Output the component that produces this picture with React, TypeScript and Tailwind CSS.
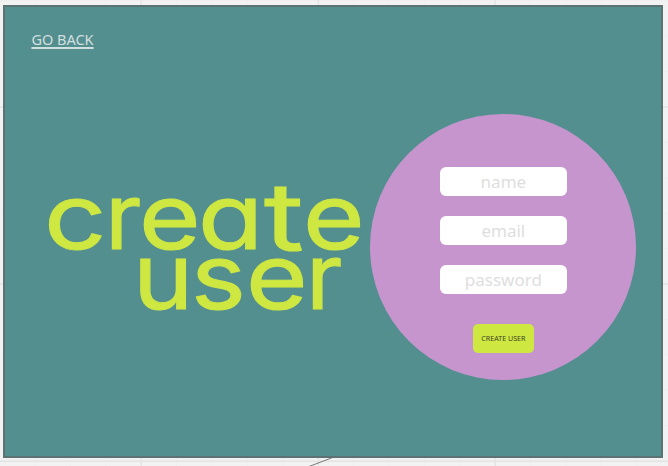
import type { ReactNode } from "react";

const fields = ["name", "email", "password"];

function Glyph({ className, children }: { className: string; children: ReactNode }) {
  return <span className={"block shrink-0 origin-left " + className}>{children}</span>;
}

function CanvasGrid() {
  const minor = Array.from({ length: 20 }, (_, i) => i);
  return (
    <svg className="absolute inset-0" width="668" height="466" fill="none">
      {minor.map((i) => (
        <path key={i} d={`M${35.4 * i - 0.5} 0V466M0 ${35.4 * i + 0.8}H668`} stroke="#eeeeee" />
      ))}
      <path d="M141.3 0V466M318.3 0V466M495.3 0V466M0 107H668M0 284H668M0 461.3H668" stroke="#e4e4e4" strokeWidth="1.5" />
      <path d="M309 466.5L334 457" stroke="#777" strokeWidth="1" />
    </svg>
  );
}

export default function App() {
  return (
    <main className="relative h-[466px] w-[668px] overflow-hidden bg-[#f2f2f2] pt-[5px] pl-[3.4px] font-['Noto_Sans',sans-serif]">
      <CanvasGrid />
      <section className="relative flex h-[453px] w-[660px] flex-col border-2 border-[#5b7473] bg-[#548f90]">
        <a className="mt-[20px] ml-[26px] h-[24px] w-fit text-[14.5px] leading-[24px] text-[#d2dfdf] underline decoration-[1.5px] underline-offset-[1.5px]">GO BACK</a>
        <div className="mt-[63px] flex">
          <h1 className="mt-[72px] ml-[38.7px] w-[326.3px] font-['Inter',sans-serif] text-[91px] leading-[60px] font-normal text-[#cee741] [-webkit-text-stroke:1.1px_#cee741] [font-feature-settings:'cv11']">
            <span className="flex">
              <Glyph className="w-[60.5px] scale-x-[1.2]">c</Glyph>
              <Glyph className="w-[34px] scale-x-[1.06]">r</Glyph>
              <Glyph className="w-[59.5px] scale-x-[1.16]">e</Glyph>
              <Glyph className="w-[66px] scale-x-[1.17]">a</Glyph>
              <Glyph className="w-[39.3px] scale-x-[1.33] scale-y-[1.02]">t</Glyph>
              <Glyph className="w-[60px] scale-x-[1.16]">e</Glyph>
            </span>
            <span className="flex pl-[89.3px]">
              <Glyph className="w-[58px] scale-x-[1.12]">u</Glyph>
              <Glyph className="w-[54.2px] scale-x-[1.14]">s</Glyph>
              <Glyph className="w-[60.3px] scale-x-[1.16]">e</Glyph>
              <Glyph className="w-[34px] scale-x-[1.06]">r</Glyph>
            </span>
          </h1>
          <form className="flex h-[266px] w-[266px] flex-col items-center rounded-full bg-[#c695cd] pt-[52.5px]">
            <div className="flex flex-col gap-[19.5px]">
              {fields.map((f) => (
                <div key={f} className="flex h-[29.5px] w-[126.5px] items-center justify-center rounded-[6px] bg-white text-[17px] text-[#dedede]">
                  {f}
                </div>
              ))}
            </div>
            <button type="button" className="mt-[29.5px] h-[29.5px] w-[61px] rounded-[5px] bg-[#cee741] pt-[1px] text-[7.1px] text-[#3d4426]">
              CREATE USER
            </button>
          </form>
        </div>
      </section>
    </main>
  );
}
